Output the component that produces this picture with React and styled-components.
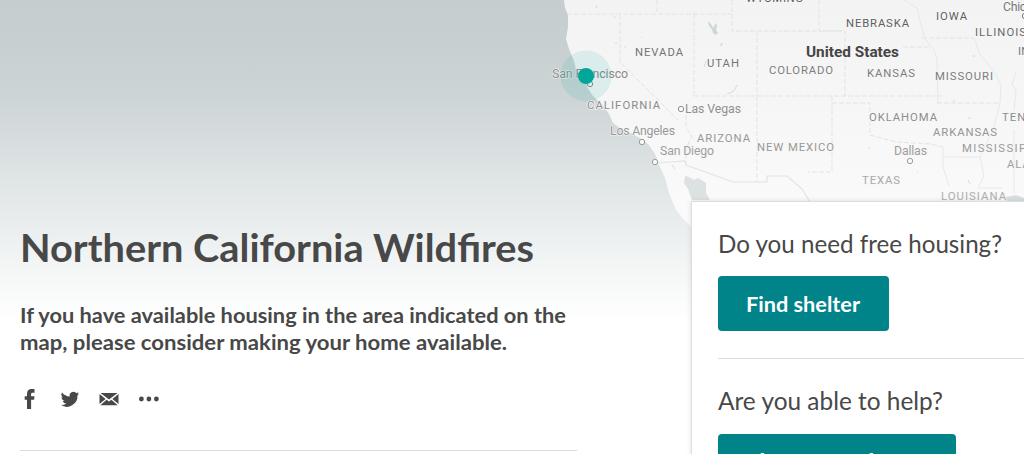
import React from "react";
import styled, { createGlobalStyle } from "styled-components";

const Global = createGlobalStyle`
  * { box-sizing: border-box; }
  body { margin: 0; overflow: hidden; background: #fff; }
`;

const Page = styled.main`
  position: relative;
  height: 454px;
  overflow: hidden;
  display: flex;
  align-items: flex-start;
  font-family: Lato, "Liberation Sans", sans-serif;
  color: #484848;
`;

const MapBackdrop = styled.svg`
  position: absolute;
  top: 0;
  left: 0;
  width: 1024px;
  height: 454px;
  font-family: Roboto, sans-serif;
`;

const Intro = styled.section`
  position: relative;
  flex: none;
  width: 577px;
  margin-right: 114px;
  padding: 224px 0 0 20px;
`;

const Fitted = styled.svg`
  display: block;
  width: 100%;
  height: ${(p) => p.$height}px;
  overflow: visible;
  font-size: ${(p) => p.$size}px;
  font-weight: ${(p) => p.$weight || 400};
  fill: currentColor;
`;

const Title = styled.h1`
  margin: 0 0 29px;
`;

const Lead = styled.p`
  margin: 0;
`;

const ShareBar = styled.nav`
  display: flex;
  align-items: center;
  gap: 19.5px;
  height: 20px;
  margin: 34px 0 41px;
`;

const ShareIcon = styled.svg`
  width: 20px;
  height: 20px;
  fill: #484848;
`;

const Rule = styled.hr`
  width: 100%;
  height: 1px;
  margin: 0;
  border: 0;
  background: #dadbdc;
`;

const Panel = styled.aside`
  position: relative;
  flex: none;
  width: 360px;
  height: 300px;
  margin-top: 201px;
  padding: 29px 26px;
  background: #fff;
  border: 1px solid #dcdedf;
  box-shadow: 0 0 5px rgba(0, 0, 0, 0.12);
`;

const Question = styled.h2`
  margin: 0 0 16px;
  height: 29px;
`;

const Action = styled.button`
  display: block;
  width: ${(p) => p.$width}px;
  height: 55px;
  padding: 0 28px;
  border: 0;
  border-radius: 4px;
  background: #008489;
  color: #fff;
  font-family: inherit;
`;

const PanelRule = styled(Rule)`
  margin: 27px 0 30px;
  background: #dcdcdc;
`;

function Line({ text, width, size, weight, height, baseline }) {
  return (
    <Fitted $height={height} $size={size} $weight={weight}>
      <text x="0" y={baseline} textLength={width} lengthAdjust="spacingAndGlyphs">{text}</text>
    </Fitted>
  );
}

const states = [
  ["NEVADA", 635, 56, 48, "#737373"],
  ["UTAH", 707, 67, 32, "#757575"],
  ["COLORADO", 769, 74, 64, "#7c7c7c"],
  ["NEBRASKA", 846, 27, 63, "#5f5f5f"],
  ["IOWA", 936, 20, 31, "#606060"],
  ["ILLINOIS", 975, 36, 51, "#666"],
  ["KANSAS", 867, 77, 48, "#7c7c7c"],
  ["MISSOURI", 935, 80, 58, "#7c7c7c"],
  ["CALIFORNIA", 587, 109, 73, "#8b8b8b"],
  ["ARIZONA", 697, 142, 53, "#999"],
  ["NEW MEXICO", 757, 151, 77, "#999"],
  ["OKLAHOMA", 869, 121, 68, "#8d8d8d"],
  ["ARKANSAS", 933, 136, 64, "#949494"],
  ["MISSISSIPPI", 962, 152, 77, "#9a9a9a"],
  ["TENNESSEE", 1002, 121, 70, "#8d8d8d"],
  ["ALABAMA", 1007, 168, 58, "#a2a2a2"],
  ["TEXAS", 862, 184, 38, "#aaa"],
  ["LOUISIANA", 941, 200, 65, "#aeaeae"],
  ["WYOMING", 746, 2, 57, "#5c5c5c"],
  ["INDIANA", 1018, 55, 46, "#757575"],
];

const cities = [
  ["San Francisco", 552, 78, 76, "#8a8a8a", 590, 84],
  ["Las Vegas", 685, 113, 56, "#909090", 681, 109],
  ["Los Angeles", 610, 135, 65, "#999", 642, 142],
  ["San Diego", 660, 155, 54, "#9f9f9f", 655, 162],
  ["Dallas", 894, 155, 33, "#9f9f9f", 910, 161],
  ["Chicago", 1003, 11, 43, "#777", 1025, 16],
];

function RegionMap() {
  return (
    <MapBackdrop viewBox="0 0 1024 454" aria-label="Affected area">
      <defs>
        <linearGradient id="sea" x1="0" y1="0" x2="0" y2="1">
          <stop offset="0" stopColor="#c5cdcf" />
          <stop offset=".1" stopColor="#c7cfd1" />
          <stop offset=".22" stopColor="#ced5d6" />
          <stop offset=".33" stopColor="#d9dfe0" />
          <stop offset=".48" stopColor="#e8eced" />
          <stop offset=".6" stopColor="#f5f7f7" />
          <stop offset=".71" stopColor="#fff" />
        </linearGradient>
        <linearGradient id="land" x1="0" y1="0" x2="0" y2="454" gradientUnits="userSpaceOnUse">
          <stop offset="0" stopColor="#f3f3f3" />
          <stop offset=".22" stopColor="#f6f6f6" />
          <stop offset=".45" stopColor="#fafafa" />
          <stop offset=".71" stopColor="#fff" />
        </linearGradient>
      </defs>
      <rect width="1024" height="454" fill="url(#sea)" />
      <path fill="url(#land)" d="M564 0l1 8 3 7 0 12-2 12 3 10 5 12 2 9 9 7 2 10 6 9 9 8 7 10 4 9 8 6 10 4 9 5 9 7 6 9 4 11 6 13 4 15 7 17 8 10 9 8V300h333V0z" />
      <path fill="#dce1e2" d="M685 176l4 1 5 3 4-2 8 5v10l4 7h-18l-4-11-4-6z" />
      <path fill="#ccd5d7" d="M708 21l3 3 2 4 3-5 1 2-1 5 2 3-2 2-3-2-1-4-3-3z" />
      <path fill="#d9dfe0" d="M721 43l2 0-1 3-2 0zM1006 197l10-2 8 3v3h-20z" />
      <path fill="none" stroke="#e1e4e4" strokeDasharray="5 2" d="M567 14h165M657 0v14M620 15v47l58 58M694 14v82M732 0v31h52M757 31v65M694 96h248M819 0v31h26v65M757 96v86M784 31h58M832 96v7h38v32l26 7 35 2 12 3M937 103h63M922 38h52M903 47h28M686 115v13l6 8-6 13v14M832 103v69h-24" />
      <path fill="none" stroke="#e6e8e8" d="M904 0l13 8 4 17 4 14 9 11 3 10 1 43M974 38l6 16 15 19 6 13-1 17-7 27-8 16-5 10 4 20-6 12h24M942 157h38M1016 72l-4 12 4 7-2 20M943 147v20l6 19M1014 130v63" />
      <path fill="none" stroke="#e2e5e5" strokeWidth="1.2" d="M657 163l28-2 1 4 47 17h34v-6h20l15 13 8 13" />
      <path fill="none" stroke="#d6dcdc" d="M596 5l1 3M614 16l1 2M642 37l0 1M615 43h2M624 47h2M619 62l1 1M737 85l-3 6-7 3M704 67l2-6M672 165l3 4M622 142h2M632 143h1M868 148h2M917 172h1M968 180l2 4M972 56h3M953 101h2M968 118h3" />

      {cities.map(([name, x, y, w, c, cx, cy]) => (
        <g key={name}>
          <circle cx={cx} cy={cy} r="2.7" fill="#f8f8f8" stroke={c} strokeWidth="1" />
          <text x={x} y={y} fontSize="12.3" fill={c} stroke="#f7f7f7" strokeWidth="1" paintOrder="stroke" textLength={w}>{name}</text>
        </g>
      ))}
      {states.map(([name, x, y, w, c]) => (
        <text key={name} x={x} y={y} fontSize="11.3" fill={c} stroke="#f7f7f7" strokeWidth="1.5" paintOrder="stroke" textLength={w}>{name}</text>
      ))}
      <text x="806" y="57" fontSize="14.8" fontWeight="700" fill="#454545" textLength="93" lengthAdjust="spacingAndGlyphs">United States</text>
      <circle cx="586" cy="76" r="25.5" fill="#00a699" fillOpacity=".11" />
      <circle cx="586" cy="76" r="8" fill="#00a699" />
    </MapBackdrop>
  );
}

export default function App() {
  return (
    <>
      <Global />
      <Page>
        <RegionMap />
        <Intro>
          <Title>
            <Line text="Northern California Wildfires" width={514} size={39} weight={700} height={50} baseline={37.5} />
          </Title>
          <Lead>
            <Line text="If you have available housing in the area indicated on the" width={546} size={21.5} weight={700} height={26} baseline={19.5} />
            <Line text="map, please consider making your home available." width={487} size={21.5} weight={700} height={26} baseline={20.5} />
          </Lead>
          <ShareBar>
            <ShareIcon viewBox="0 0 20 20"><path d="M7 20v-9.200H4.700V7.200H7V5C7 1.700 8.700 0 11.500 0h3v3.800h-1.900c-1.200 0-1.500.5-1.500 1.500v1.900h3.400l-.4 3.600h-3V20z" /></ShareIcon>
            <ShareIcon viewBox="0 0 24 24"><path d="M23.6 4.9a9.8 9.8 0 0 1-2.8.8 4.900 4.900 0 0 0 2.100-2.700 9.900 9.900 0 0 1-3.100 1.200 4.900 4.900 0 0 0-8.400 4.500A14 14 0 0 1 1.300 3.500a4.900 4.900 0 0 0 1.500 6.600 4.900 4.900 0 0 1-2.200-.6c0 2.300 1.600 4.400 3.900 4.900a5 5 0 0 1-2.200.1 4.900 4.900 0 0 0 4.600 3.400A9.900 9.900 0 0 1 0 19.900 14 14 0 0 0 21.500 7.500c.8-.7 1.600-1.600 2.100-2.600z" transform="translate(1.200 1) scale(.92)" /></ShareIcon>
            <ShareIcon viewBox="0 0 20 20"><path d="M1.500 4h17L10 10.500zM.5 4.900l6.100 5-6.100 5.100zM19.500 4.900V15l-6.100-5.100zM1.300 16.200l6.300-5.500 2.400 1.900 2.400-1.900 6.300 5.500z" /></ShareIcon>
            <ShareIcon viewBox="0 0 20 20"><circle cx="2.400" cy="10" r="2.400" /><circle cx="9.900" cy="10" r="2.400" /><circle cx="17.400" cy="10" r="2.400" /></ShareIcon>
          </ShareBar>
          <Rule />
        </Intro>
        <Panel>
          <Question><Line text="Do you need free housing?" width={284} size={24.5} height={29} baseline={21.5} /></Question>
          <Action $width={171}><Line text="Find shelter" width={114} size={20.5} weight={700} height={26} baseline={20.8} /></Action>
          <PanelRule />
          <Question><Line text="Are you able to help?" width={225} size={24.5} height={29} baseline={21} /></Question>
          <Action $width={238}><Line text="Share your home" width={184} size={20.5} weight={700} height={26} baseline={20.3} /></Action>
        </Panel>
      </Page>
    </>
  );
}
